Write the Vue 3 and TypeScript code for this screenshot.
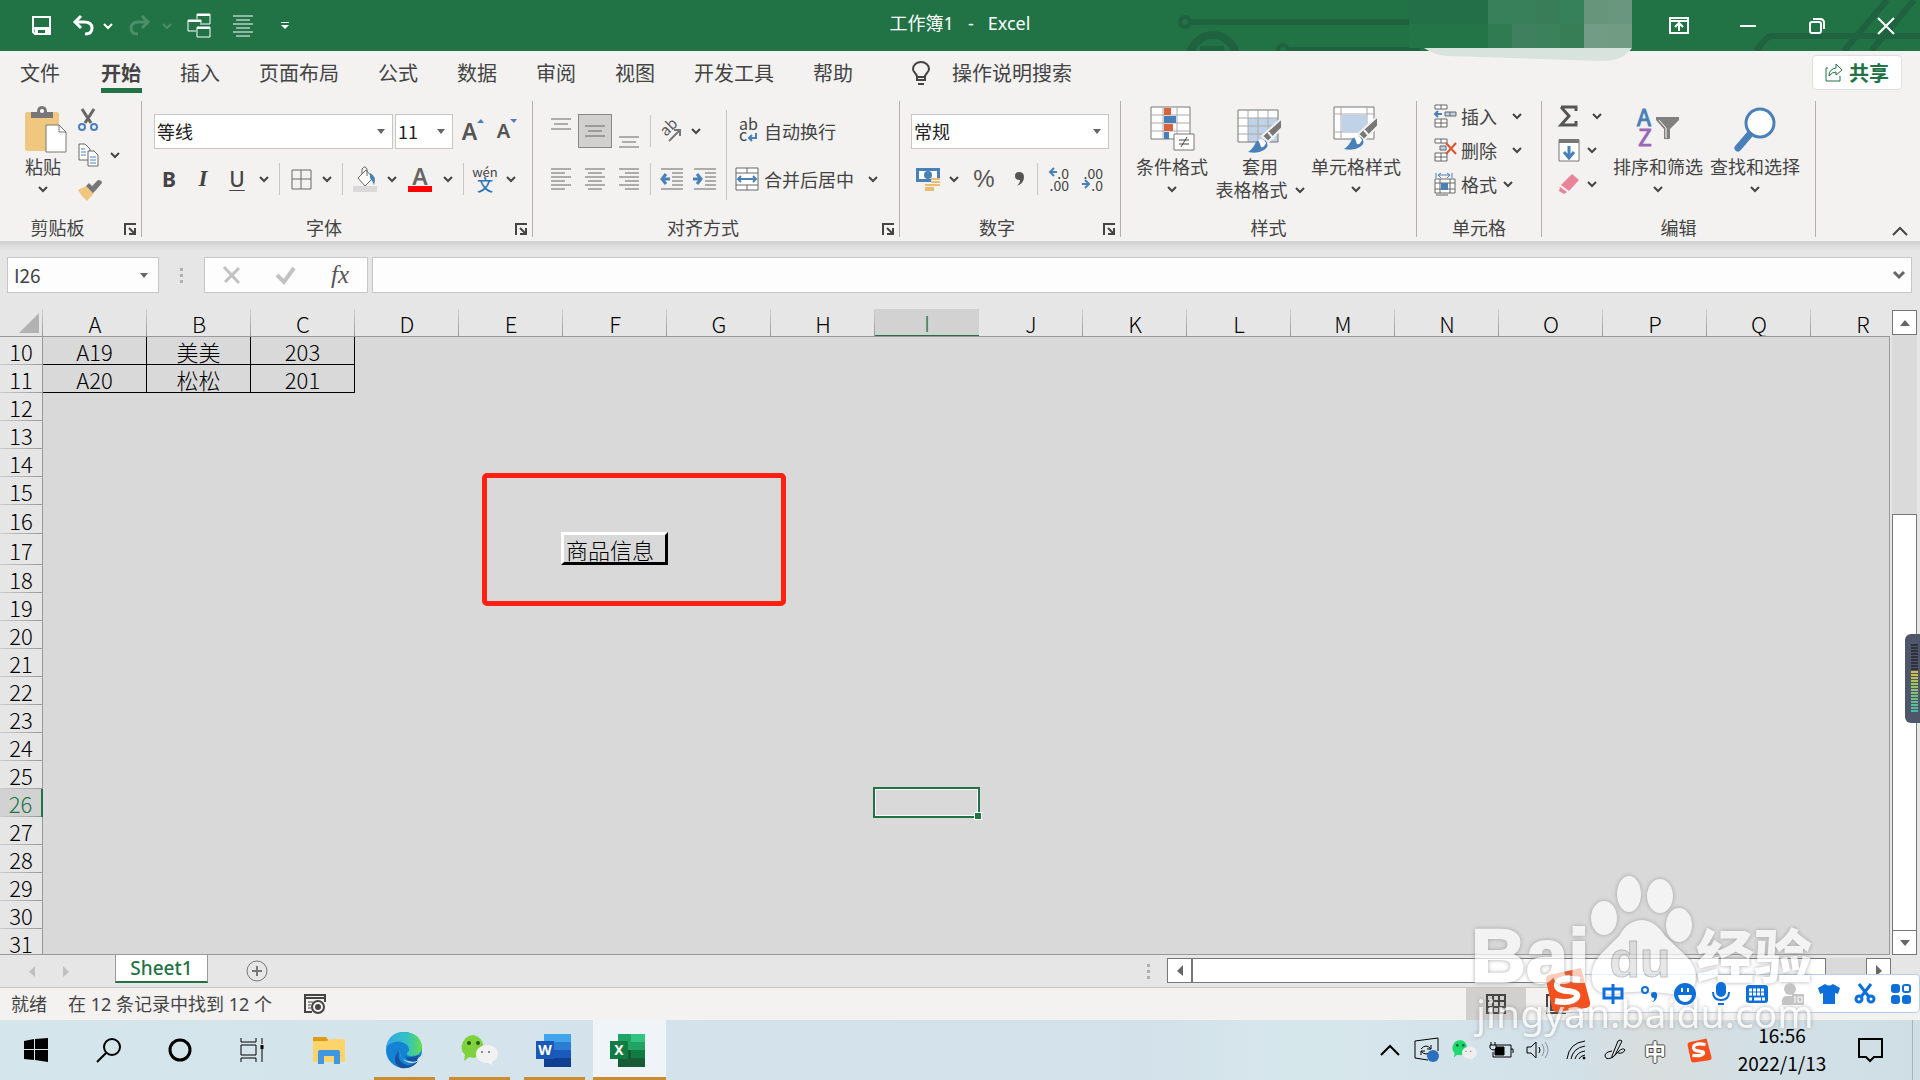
<script setup lang="ts">
import { h, ref } from 'vue'

interface IconProps {
  d: string
  w?: number
  h?: number
  c?: string
  s?: number
}

/* Single-path stroked icon */
const Ic = (p: IconProps) =>
  h('svg', { width: p.w ?? 22, height: p.h ?? 22, viewBox: `0 0 ${p.w ?? 22} ${p.h ?? 22}` }, [
    h('path', { d: p.d, fill: 'none', stroke: p.c ?? '#666', 'stroke-width': p.s ?? 1 }),
  ])
/* Small drop-down arrow beside a command */
const Chev = () =>
  h('svg', { width: 10, height: 8, viewBox: '0 0 10 8' }, [
    h('path', { d: 'M1 2l4 4 4-4', fill: 'none', stroke: '#444', 'stroke-width': 2 }),
  ])
const Tri = () =>
  h('svg', { class: 'tri', width: 8, height: 5, viewBox: '0 0 8 5' }, [h('path', { d: 'M0 0h8l-4 5z', fill: '#666' })])
const Launch = () =>
  h('svg', { width: 12, height: 12, viewBox: '0 0 12 12' }, [
    h('path', { d: 'M1 12V1h11M5 5l5 5M11 5v6H5', fill: 'none', stroke: '#444', 'stroke-width': 2 }),
  ])

const tabs = ['文件', '开始', '插入', '页面布局', '公式', '数据', '审阅', '视图', '开发工具', '帮助']
const active = ref('开始')
const cols = 'ABCDEFGHIJKLMNOPQR'.split('')
const rows = Array.from({ length: 22 }, (_, i) => i + 10)
const data: Record<number, string[]> = { 10: ['A19', '美美', '203'], 11: ['A20', '松松', '201'] }
const cell = (r: number, c: number) => data[r]?.[c] ?? ''

const mosaic = [
  ['#236f47', '#37805a', '#37805a', '#387d57', '#37815a', '#67957c', '#6a967f'],
  ['#237447', '#317b53', '#3f815e', '#3b815b', '#377e57', '#739c86', '#729b84'],
]
const alignTop = 'M1 1h20M4 6h14M1 11h20'
const fontName = ref('等线')
const fontSize = ref('11')
const numFormat = ref('常规')
const nameBox = ref('I26')
const formula = ref('')
</script>

<template>
  <div class="app">
    <header class="title">
      <svg class="circuit" width="760" height="51" viewBox="1160 0 760 51" fill="none" stroke="#1f6240" stroke-width="6">
        <circle cx="1185" cy="22" r="5" stroke-width="4" />
        <path d="M1191 22h220M1290 50h130M1756 51l9-11q3-4 7-4h148M1844 51l43-51M1871 51l43-51" />
        <circle cx="1213" cy="58" r="23" stroke-width="8" />
        <path d="M1200 50h24" stroke-width="8" />
        <circle cx="1283" cy="50" r="5" stroke-width="4" />
      </svg>
      <div class="mosaic">
        <div v-for="(line, i) in mosaic" :key="i" class="mrow">
          <i v-for="(c, j) in line" :key="j" :style="{ background: c }"></i>
        </div>
        <svg width="208" height="13" viewBox="0 0 208 13"><path d="M0 0h208q-9 13-30 13L24 8Q10 7 0 0z" fill="#d9e3dd" /></svg>
      </div>
      <div class="qat">
        <button class="q-save" aria-label="保存"><svg width="19" height="19" viewBox="0 0 19 19"><path d="M1 1h17v17H3l-2-2z" fill="none" stroke="#fff" stroke-width="2" /><path d="M2 11h15v7h-4v-4H6v4H3z" fill="#fff" /></svg></button>
        <button class="q-undo" aria-label="撤消"><svg width="23" height="21" viewBox="0 0 23 21"><path d="M9 1L3 7l6 6M3 7h9q8 0 8 6t-7 6" fill="none" stroke="#fff" stroke-width="3" /></svg></button>
        <button class="q-ch" aria-label="撤消列表"><Ic d="M1 2l4 4 4-4" :w="10" :h="8" c="#fff" :s="2" /></button>
        <button class="q-redo" aria-label="恢复"><svg width="23" height="21" viewBox="0 0 23 21"><path d="M14 1l6 6-6 6M20 7h-9q-8 0-8 6t7 6" fill="none" stroke="#4c8e69" stroke-width="3" /></svg></button>
        <button class="q-ch" aria-label="恢复列表"><Ic d="M1 2l4 4 4-4" :w="10" :h="8" c="#4c8e69" :s="2" /></button>
        <button class="q-big" aria-label="切换窗口"><svg width="24" height="25" viewBox="0 0 24 25" fill="none" stroke="#fff"><path d="M10 6V1h13v10h-8M9 18H1V7h13v5M10 14h13v10H10z" /><path d="M10 2h13M1 8h13M10 15h13" stroke-width="2" /></svg></button>
        <button class="q-big" aria-label="居中"><Ic d="M0 1h20M3 5h14M0 9h20M3 13h14M0 17h20M3 21h14" :w="20" :h="22" c="#fff" /></button>
        <button class="q-more" aria-label="自定义快速访问工具栏"><svg width="8" height="8" viewBox="0 0 8 8"><path d="M0 0h8v1H0zM0 3h8L4 7z" fill="#fff" /></svg></button>
      </div>
      <h1>工作簿1&nbsp;&nbsp; -&nbsp;&nbsp; Excel</h1>
      <div class="win">
        <button aria-label="功能区显示选项"><Ic d="M1 1h18v15H1zM1 4h18M10 14V7M6 10l4-4 4 4" :w="20" :h="17" c="#fff" :s="2" /></button>
        <button aria-label="最小化"><Ic d="M0 1h16" :w="16" :h="2" c="#fff" :s="2" /></button>
        <button aria-label="还原"><svg width="16" height="17" viewBox="0 0 16 17" fill="none" stroke="#fff" stroke-width="2"><rect x="1" y="5" width="11" height="11" rx="2" /><path d="M4 2h7q4 0 4 4v6" /></svg></button>
        <button aria-label="关闭"><Ic d="M0 0l16 16M16 0L0 16" :w="16" :h="16" c="#fff" :s="2" /></button>
      </div>
    </header>

    <nav class="tabs">
      <button v-for="t in tabs" :key="t" :class="{ on: active === t }" @click="active = t">{{ t }}</button>
      <button class="tell">
        <svg width="18" height="25" viewBox="0 0 18 25" fill="none" stroke="#444" stroke-width="2"><path d="M5 19v-3q0-2-2-4-2-2-2-4a8 7 0 0 1 16 0q0 2-2 4-2 2-2 4v3zM5 16h8M6 23h6" /></svg>
        操作说明搜索
      </button>
      <button class="share">
        <svg width="18" height="19" viewBox="0 0 18 19" fill="none" stroke="#217346"><path d="M3 5H1v13h14v-5M4 13q0-7 7-8V1l6 6-6 5V9q-4 0-7 4z" /></svg>
        共享
      </button>
    </nav>

    <section class="ribbon">
      <div class="grp g1">
        <div class="body">
          <button class="big b-paste">
            <svg width="48" height="46" viewBox="-6 0 48 46"><path d="M2 6h30q2 0 2 2v37H2q-2 0-2-2V8q0-2 2-2z" fill="#efc77f" /><path d="M6 12V6h6q0-6 5-6t5 6h6v6z" fill="#777" /><circle cx="17" cy="5" r="2" fill="#fff" /><path d="M21 19h13l7 7v20H21z" fill="#fff" stroke="#777" /><path d="M34 19v7h7" fill="none" stroke="#777" /></svg>
            <span>粘贴</span><Chev />
          </button>
          <div class="clip">
            <button aria-label="剪切"><svg width="20" height="24" viewBox="0 0 20 24" fill="none"><path d="M4 1l9 14M16 1L7 15" stroke="#666" stroke-width="3" /><circle cx="4" cy="19" r="3" stroke="#4a80b9" stroke-width="2" /><circle cx="16" cy="19" r="3" stroke="#4a80b9" stroke-width="2" /></svg></button>
            <button aria-label="复制"><svg width="21" height="24" viewBox="0 0 21 24" fill="#fff" stroke="#666"><path d="M1 1h6l5 5v11H1z" /><path d="M10 8h6l4 4v11H10z" /><path d="M3 6h4M3 9h5M3 12h5M12 14h6M12 17h6M12 20h6" stroke="#4a80b9" /></svg><Chev /></button>
            <button aria-label="格式刷"><svg width="24" height="21" viewBox="0 0 24 21"><path d="M0 10l8-4 8 7-7 8q-6-5-9-11z" fill="#efc77f" /><path d="M8 6l3-3 7 7-3 3zM14 6l6-6q4 0 4 3l-6 7z" fill="#777" /></svg></button>
          </div>
        </div>
        <div class="cap"><span>剪贴板</span><button aria-label="剪贴板选项"><Launch /></button></div>
      </div>

      <div class="grp g2">
        <div class="rows">
          <div class="row inset">
            <label class="pick font"><select v-model="fontName" aria-label="字体"><option>等线</option></select><Tri /></label>
            <label class="pick size"><select v-model="fontSize" aria-label="字号"><option>11</option></select><Tri /></label>
            <button class="w36 glyph" aria-label="增大字号"><b class="ga">A</b><svg class="up" width="7" height="4" viewBox="0 0 7 4"><path d="M0 4h7L4 0z" fill="#4a80b9" /></svg></button>
            <button class="w28 glyph" aria-label="减小字号"><b class="gs">A</b><svg class="up" width="7" height="4" viewBox="0 0 7 4"><path d="M0 0h7L4 4z" fill="#4a80b9" /></svg></button>
          </div>
          <div class="row">
            <button class="w34 bold">B</button><button class="w34 ital">I</button><button class="w34 under">U</button><button class="w20" aria-label="下划线选项"><Chev /></button>
            <i class="sep"></i>
            <button class="w32" aria-label="边框"><Ic d="M1 1h19v19H1zM10 1v19M1 10h19" :w="21" :h="21" c="#666" /></button><button class="w20" aria-label="边框选项"><Chev /></button>
            <i class="sep"></i>
            <button class="w34" aria-label="填充颜色"><svg width="24" height="26" viewBox="0 0 24 26"><path d="M5 12l8-8 7 8-8 8z" fill="#fff" stroke="#666" /><path d="M9 8V3q3-4 5 0v7" fill="none" stroke="#666" /><path d="M17 7q7 3 4 12-2-5-4-7z" fill="#4a80b9" /><path d="M0 20h24v6H0z" fill="#d9d9d9" /></svg></button><button class="w20" aria-label="填充颜色选项"><Chev /></button>
            <button class="w36 fcol" aria-label="字体颜色"><b>A</b><i></i></button><button class="w20" aria-label="字体颜色选项"><Chev /></button>
            <i class="sep"></i>
            <button class="w32 wen" aria-label="显示拼音"><span>wén</span><span class="zi">文</span></button><button class="w20" aria-label="拼音选项"><Chev /></button>
          </div>
        </div>
        <div class="cap"><span>字体</span><button aria-label="字体选项"><Launch /></button></div>
      </div>

      <div class="grp g3">
        <div class="body">
          <div class="rows alg">
            <div class="row">
              <button class="w34 top" aria-label="顶端对齐"><Ic :d="alignTop" :h="12" /></button>
              <button class="w34 on" aria-label="垂直居中"><Ic :d="alignTop" :h="12" /></button>
              <button class="w34 bot" aria-label="底端对齐"><Ic :d="alignTop" :h="12" /></button>
              <i class="sep"></i>
              <button class="w32" aria-label="方向"><svg width="22" height="22" viewBox="0 0 22 22"><text font-size="15" fill="#555" transform="translate(6 17) rotate(-45)">ab</text><path d="M9 21L20 10M14 10h6v6" fill="none" stroke="#777" stroke-width="2" /></svg></button><button class="w18" aria-label="方向选项"><Chev /></button>
            </div>
            <div class="row">
              <button class="w34" aria-label="左对齐"><Ic d="M1 1h20M1 5h14M1 9h20M1 13h14M1 17h20M1 21h14" /></button>
              <button class="w34" aria-label="居中"><Ic d="M1 1h20M4 5h14M1 9h20M4 13h14M1 17h20M4 21h14" /></button>
              <button class="w34" aria-label="右对齐"><Ic d="M1 1h20M7 5h14M1 9h20M7 13h14M1 17h20M7 21h14" /></button>
              <i class="sep"></i>
              <button class="w32" aria-label="减少缩进量"><svg width="23" height="22" viewBox="0 0 23 22" fill="none"><path d="M1 1h22M12 5h11M12 9h11M12 13h11M12 17h11M1 21h22" stroke="#666" /><path d="M10 11H2M6 6l-4 5 4 5" stroke="#4a80b9" stroke-width="3" /></svg></button>
              <button class="w34" aria-label="增加缩进量"><svg width="23" height="22" viewBox="0 0 23 22" fill="none"><path d="M1 1h22M12 5h11M12 9h11M12 13h11M12 17h11M1 21h22" stroke="#666" /><path d="M0 11h8M4 6l4 5-4 5" stroke="#4a80b9" stroke-width="3" /></svg></button>
            </div>
          </div>
          <div class="rows wraps">
            <button class="row txt"><svg width="24" height="24" viewBox="0 0 24 24"><text x="4" y="11" font-size="16" fill="#444">ab</text><text x="4" y="22" font-size="16" fill="#444">c</text><path d="M21 14v5h-6M17 16l-3 3 3 3" fill="none" stroke="#4a80b9" stroke-width="2" /></svg><span>自动换行</span></button>
            <button class="row txt"><svg width="24" height="24" viewBox="0 0 24 24" fill="none"><path d="M1 1h22v22H1zM1 6h22M1 18h22M12 1v5M12 18v5" fill="#fff" stroke="#666" /><path d="M3 12h18M6 9l-3 3 3 3M18 9l3 3-3 3" stroke="#4a80b9" stroke-width="2" /></svg><span>合并后居中</span><Chev class="gap" /></button>
          </div>
        </div>
        <div class="cap"><span>对齐方式</span><button aria-label="对齐方式选项"><Launch /></button></div>
      </div>

      <div class="grp g4">
        <div class="rows">
          <div class="row"><label class="pick fmt"><select v-model="numFormat" aria-label="数字格式"><option>常规</option></select><Tri /></label></div>
          <div class="row">
            <button class="w34" aria-label="会计数字格式"><svg width="24" height="23" viewBox="0 0 24 23"><path d="M0 0h24v14H0z" fill="#4a80b9" /><path d="M3 3h18v8H3z" fill="#fff" /><circle cx="12" cy="7" r="4" fill="#4a80b9" /><path d="M15 10h9v10h-9zM8 16h10v7H8z" fill="#f3f2f1" /><path d="M15 11h9M15 14h9M15 17h9M9 17h9M9 20h9M9 22h9" stroke="#e8bd72" stroke-width="2" /></svg></button><button class="w18" aria-label="会计格式选项"><Chev /></button>
            <button class="pct">%</button>
            <button class="w28" aria-label="千位分隔样式"><svg width="9" height="14" viewBox="0 0 9 14"><path d="M1 14q4-2 4-6-5 0-5-4t4-4q5 0 5 5 0 7-8 9z" fill="#555" /></svg></button>
            <i class="sep"></i>
            <button class="w34 dec" aria-label="增加小数位数"><span><Ic d="M9 5H2M6 1L2 5l4 4" :w="9" :h="10" c="#4a80b9" :s="2" />.0</span><span>.00</span></button>
            <button class="w34 dec" aria-label="减少小数位数"><span>.00</span><span><Ic d="M0 5h7M3 1l4 4-4 4" :w="9" :h="10" c="#4a80b9" :s="2" />.0</span></button>
          </div>
        </div>
        <div class="cap"><span>数字</span><button aria-label="数字选项"><Launch /></button></div>
      </div>

      <div class="grp g5">
        <div class="body">
          <button class="big b-cond">
            <svg width="46" height="46" viewBox="0 0 46 46"><path d="M2 1h39v32H2z" fill="#fff" stroke="#777" /><path d="M2 9h39M2 17h39M2 25h39M14 1v32M28 1v32" stroke="#aaa" /><path d="M15 2h7v7h-7zM15 18h9v7h-9z" fill="#d9623f" /><path d="M15 10h12v7H15zM15 26h5v7h-5z" fill="#4a80b9" /><path d="M25 28h20v16H25z" fill="#fff" stroke="#777" /><path d="M30 34h10M30 38h10M38 31l-6 10" stroke="#444" /></svg>
            <span>条件格式</span><Chev />
          </button>
          <button class="big b-table">
            <svg width="46" height="46" viewBox="0 0 46 46"><path d="M1 4h40v32H1z" fill="#fff" /><path d="M11 12h30v24H11z" fill="#bfd2e8" /><path d="M1 12h40M1 20h40M1 28h40M11 4v32M21 4v32M31 4v32" stroke="#aaa" /><path d="M1 4h40v32H1z" fill="none" stroke="#777" /><path d="M45 12v10L31 36l-6-6z" fill="#777" stroke="#f3f2f1" stroke-width="2" /><path d="M31 26l6 7" stroke="#f3f2f1" stroke-width="2" /><path d="M11 46q5-3 8-10 5-5 10-1 4 5-2 9-6 4-16 2z" fill="#4a80b9" /><path d="M21 34q5-3 8 3-2 5-5 4-1-4-3-7z" fill="#fff" /></svg>
            <span>套用</span><span>表格格式 <Chev /></span>
          </button>
          <button class="big b-cell">
            <svg width="46" height="46" viewBox="0 0 46 46"><path d="M1 1h40v32H1z" fill="#fff" stroke="#777" /><path d="M1 8h40M1 26h40M8 1v32M34 1v32" stroke="#aaa" /><path d="M9 9h25v17H9z" fill="#bfd2e8" /><path d="M45 10v10L31 34l-6-6z" fill="#777" stroke="#f3f2f1" stroke-width="2" /><path d="M31 24l6 7" stroke="#f3f2f1" stroke-width="2" /><path d="M11 43q5-3 8-10 5-5 10-1 4 5-2 9-6 4-16 2z" fill="#4a80b9" /><path d="M21 31q5-3 8 3-2 5-5 4-1-4-3-7z" fill="#fff" /></svg>
            <span>单元格样式</span><Chev />
          </button>
        </div>
        <div class="cap solo"><span>样式</span></div>
      </div>

      <div class="grp g6">
        <div class="stack">
          <button><svg width="24" height="24" viewBox="0 0 24 24" fill="#fff" stroke="#666"><path d="M2 1h12v4H2zM8 1v4M2 15h12v8H2zM8 15v8M2 19h12" /><path d="M12 8h11v4H12zM17 8v4" fill="#bfd2e8" /><path d="M9 10H2M5 7l-3 3 3 3" fill="none" stroke="#4a80b9" stroke-width="2" /></svg><span>插入</span><Chev class="far" /></button>
          <button><svg width="24" height="24" viewBox="0 0 24 24" fill="#fff" stroke="#666"><path d="M2 1h12v4H2zM8 1v4M2 15h12v8H2zM8 15v8M2 19h12" /><path d="M7 8h6v4H7z" fill="#bfd2e8" /><path d="M13 5l10 11M23 5L13 16" stroke="#d9532f" stroke-width="2" /></svg><span>删除</span><Chev class="far" /></button>
          <button><svg width="24" height="24" viewBox="0 0 24 24" fill="#fff" stroke="#666"><path d="M2 7h20v14H2zM7 7v14M17 7v14M2 11h20M2 17h20" /><path d="M8 11h7v7H8z" fill="#4a80b9" stroke="none" /><path d="M3 1v5M19 1v5M5 3h12M8 1L5 3l3 3M14 1l3 2-3 3" fill="none" stroke="#4a80b9" /><path d="M3 23h12" /></svg><span>格式</span><Chev class="near" /></button>
        </div>
        <div class="cap solo"><span>单元格</span></div>
      </div>

      <div class="grp g7">
        <div class="body">
          <div class="stack edit">
            <button aria-label="自动求和"><svg width="24" height="22" viewBox="0 0 24 22"><path d="M5 2h15v4M5 2l8 9-8 9h15v-4" fill="none" stroke="#555" stroke-width="3" /></svg><Chev class="near" /></button>
            <button aria-label="填充"><svg width="24" height="24" viewBox="0 0 24 24"><path d="M3 2h20v21H3z" fill="#fff" stroke="#777" /><path d="M3 1h20v4H3z" fill="#777" /><path d="M13 8v11M8 14l5 6 5-6" fill="none" stroke="#4a80b9" stroke-width="3" /></svg><Chev /></button>
            <button aria-label="清除"><svg width="24" height="22" viewBox="0 0 24 22"><path d="M16 1l7 6-10 11-8-6z" fill="#e8839a" /><path d="M4 14l7 5-3 2-5-3z" fill="#e8839a" /></svg><Chev /></button>
          </div>
          <button class="big b-sort">
            <svg width="44" height="46" viewBox="0 0 44 46"><text x="1" y="20" font-size="23" fill="#4a80b9" stroke="#4a80b9">A</text><text x="2" y="40" font-size="23" fill="#9966b8" stroke="#9966b8">Z</text><path d="M20 11h23v3l-9 9v10h-6V23l-8-9z" fill="#808080" /><path d="M23 14l7 8v10" fill="none" stroke="#fff" /></svg>
            <span>排序和筛选</span><Chev />
          </button>
          <button class="big b-find">
            <svg width="44" height="46" viewBox="0 0 44 46"><path d="M5 42l12-14" stroke="#4a80b9" stroke-width="7" stroke-linecap="round" /><circle cx="27" cy="17" r="14" fill="#fff" stroke="#4a80b9" stroke-width="3" /></svg>
            <span>查找和选择</span><Chev />
          </button>
        </div>
        <div class="cap solo"><span>编辑</span></div>
      </div>
      <button class="collapse" aria-label="折叠功能区"><Ic d="M1 9l7-7 7 7" :w="16" :h="11" c="#444" :s="2" /></button>
    </section>

    <section class="fbar">
      <label class="name"><input v-model="nameBox" aria-label="名称框" /><Tri /></label>
      <div class="dots"><i></i><i></i><i></i></div>
      <div class="fx">
        <button aria-label="取消"><svg width="18" height="18" viewBox="0 0 18 18"><path d="M1 1l15 16M16 2L2 16" stroke="#c2c2c2" stroke-width="3" /></svg></button>
        <button aria-label="输入"><svg width="20" height="18" viewBox="0 0 20 18"><path d="M1 9l7 7L18 2" fill="none" stroke="#c2c2c2" stroke-width="4" /></svg></button>
        <button class="fxi">fx</button>
      </div>
      <label class="formula"><input v-model="formula" aria-label="编辑栏" /><Ic d="M1 1l5 5 5-5" :w="12" :h="9" c="#666" :s="3" /></label>
    </section>

    <main class="work">
      <div class="sheet">
        <table>
          <colgroup><col class="c0" /><col v-for="c in cols" :key="c" class="cn" /></colgroup>
          <thead>
            <tr><th class="corner"><svg width="20" height="20" viewBox="0 0 20 20"><path d="M20 0v20H0z" fill="#b2b2b2" /></svg></th><th v-for="c in cols" :key="c" :class="{ sel: c === 'I' }">{{ c }}</th></tr>
          </thead>
          <tbody>
            <tr v-for="r in rows" :key="r" :class="'r' + r">
              <th :class="{ sel: r === 26 }">{{ r }}</th>
              <td v-for="(c, i) in cols" :key="c" :class="{ box: cell(r, i) }">{{ cell(r, i) }}<span v-if="r === 26 && c === 'I'" class="cursor"><i></i></span></td>
            </tr>
          </tbody>
        </table>
        <div class="mark"></div>
        <button class="macro">商品信息</button>
      </div>
      <div class="vbar">
        <button aria-label="向上滚动"><svg width="10" height="6" viewBox="0 0 10 6"><path d="M0 6l5-6 5 6z" fill="#666" /></svg></button>
        <div class="track"><div class="thumb"></div></div>
        <button aria-label="向下滚动"><svg width="10" height="6" viewBox="0 0 10 6"><path d="M0 0l5 6 5-6z" fill="#666" /></svg></button>
      </div>
      <div class="level"><i></i></div>
    </main>

    <section class="sbar">
      <button class="nav" aria-label="上一张"><svg width="6" height="11" viewBox="0 0 6 11"><path d="M6 0v11L0 6z" fill="#c0c0c0" /></svg></button>
      <button class="nav" aria-label="下一张"><svg width="6" height="11" viewBox="0 0 6 11"><path d="M0 0v11l6-5z" fill="#c0c0c0" /></svg></button>
      <button class="tab">Sheet1</button>
      <button class="add" aria-label="新工作表"><svg width="22" height="22" viewBox="0 0 22 22"><circle cx="11" cy="11" r="10" fill="none" stroke="#777" /><path d="M11 6v10M6 11h10" stroke="#777" stroke-width="2" /></svg></button>
      <div class="dots"><i></i><i></i><i></i></div>
      <div class="hbar">
        <button aria-label="向左滚动"><svg width="6" height="11" viewBox="0 0 6 11"><path d="M6 0v11L0 6z" fill="#666" /></svg></button>
        <div class="hthumb"></div>
        <button class="hr" aria-label="向右滚动"><svg width="6" height="11" viewBox="0 0 6 11"><path d="M0 0v11l6-5z" fill="#666" /></svg></button>
      </div>
    </section>

    <footer class="status">
      <span>就绪</span><span>在 12 条记录中找到 12 个</span>
      <button aria-label="录制宏"><svg width="22" height="20" viewBox="0 0 22 20" fill="none" stroke="#444"><path d="M8 18H1V1h20v7M1 4h20" stroke-width="2" /><path d="M4 8h5M4 11h3M4 14h3" /><circle cx="14" cy="13" r="6" stroke-width="2" fill="#f3f2f1" /><circle cx="14" cy="13" r="2" fill="#444" stroke-width="2" /></svg></button>
      <div class="views">
        <button class="on" aria-label="普通"><Ic d="M1 1h18v18H1zM7 1v18M13 1v18M1 7h18M1 13h18" :w="20" :h="20" c="#444" :s="2" /></button>
        <button aria-label="页面布局视图"><Ic d="M1 1h18v18H1zM5 4h10v12H5z" :w="20" :h="20" c="#444" :s="2" /></button>
      </div>
    </footer>

    <footer class="task">
      <button class="sys" aria-label="开始菜单"><svg width="24" height="24" viewBox="0 0 24 24"><path d="M0 3l10-2v10H0zM11 1l13-1v11H11zM0 12h10v10L0 21zM11 12h13v12l-13-2z" /></svg></button>
      <button class="sys" aria-label="搜索"><svg width="25" height="25" viewBox="0 0 25 25" fill="none" stroke="#000" stroke-width="2"><circle cx="16" cy="9" r="8" /><path d="M10 15l-9 9" /></svg></button>
      <button class="sys" aria-label="Cortana"><svg width="24" height="24" viewBox="0 0 24 24"><circle cx="12" cy="12" r="10" fill="none" stroke="#000" stroke-width="3" /></svg></button>
      <button class="sys" aria-label="任务视图"><svg width="25" height="24" viewBox="0 0 25 24" fill="none" stroke="#000"><path d="M1 0v4h15V0M1 7h15v10H1zM1 24v-4h15v4M22 0v6M22 11v13" /><path d="M22 7v4" stroke-width="3" /></svg></button>
      <button class="appi first" aria-label="文件资源管理器"><svg width="32" height="28" viewBox="0 0 32 28"><path d="M0 1h13l3 4H0z" fill="#dc9c15" /><path d="M0 5h14l3-2h13q2 0 2 2v21H0z" fill="#fdd469" /><path d="M5 16q0-2 2-2h18q2 0 2 2v12h-6v-8H11v8H5z" fill="#3e97e0" /></svg></button>
      <button class="appi open" aria-label="Edge"><svg width="36" height="36" viewBox="0 0 36 36"><defs><linearGradient id="e1" x1="0" x2="1"><stop stop-color="#35a5e8" /><stop offset=".6" stop-color="#31c3c0" /><stop offset="1" stop-color="#68dc4a" /></linearGradient></defs><circle cx="18" cy="18" r="18" fill="#1483d4" /><path d="M0 17Q2 0 18 0q17 1 18 15 0 9-11 9-5 0-4-3 4-3 0-8-7-6-15-2Q1 13 0 17z" fill="url(#e1)" /><path d="M13 18q-3 12 8 15 6 1 12-5-7 10-18 8Q4 30 13 18z" fill="#15529e" /><path d="M14 17q-2 9 7 12 7 1 14-5l1 2-3 3q-8 4-14 0-7-5-5-12z" fill="#d5e4ec" /><path d="M19 24q6 3 14-1l-2 6q-8 3-12-5z" fill="#15529e" /></svg></button>
      <button class="appi open" aria-label="微信"><svg width="36" height="30" viewBox="0 0 36 30"><path d="M13 0a13 12 0 0 1 0 23l-5-1-5 4 1-6A13 12 0 0 1 13 0z" fill="#7ed33c" /><circle cx="8" cy="8" r="2" fill="#285c12" /><circle cx="17" cy="8" r="2" fill="#285c12" /><path d="M25 10a11 9 0 0 1 6 17v3l-4-2A11 9 0 1 1 25 10z" fill="#f2f2f2" /><circle cx="21" cy="17" r="1" fill="#666" /><circle cx="28" cy="17" r="1" fill="#666" /></svg></button>
      <button class="appi open" aria-label="Word"><svg width="36" height="33" viewBox="0 0 36 33"><path d="M8 0h27v8H8z" fill="#41a5ee" /><path d="M8 8h27v8H8z" fill="#2b7cd3" /><path d="M8 16h27v8H8z" fill="#185abd" /><path d="M8 24h27v9H8z" fill="#103f91" /><path d="M0 7h18v18H0z" fill="#1b57b5" /><text x="9" y="21" text-anchor="middle" font-size="14" font-weight="700" fill="#fff">W</text></svg></button>
      <button class="appi open cur" aria-label="Excel"><svg width="36" height="33" viewBox="0 0 36 33"><path d="M8 0h27v33H8z" fill="#21a366" /><path d="M21 0h14v8H21z" fill="#33c481" /><path d="M8 16h27v17H8z" fill="#185c37" /><path d="M21 16h14v8H21z" fill="#107c41" /><path d="M0 7h18v18H0z" fill="#107c41" /><text x="9" y="21" text-anchor="middle" font-size="14" font-weight="700" fill="#fff">X</text></svg></button>
      <div class="tray">
        <button aria-label="显示隐藏的图标"><Ic d="M1 10l9-9 9 9" :w="20" :h="11" c="#000" :s="2" /></button>
        <button aria-label="同步"><svg width="26" height="26" viewBox="0 0 26 26" fill="none" stroke="#000"><path d="M1 4l23-3v13M1 4v17l13 2" /><path d="M7 12q5-6 10 0M17 8v4h-4M17 14q-5 6-10 0M7 18v-4h4" /><circle cx="19" cy="19" r="6" fill="#2b6fbd" stroke="none" /></svg></button>
        <button aria-label="微信"><svg width="24" height="20" viewBox="0 0 36 30"><path d="M13 0a13 12 0 0 1 0 23l-5-1-5 4 1-6A13 12 0 0 1 13 0z" fill="#1ed76d" /><circle cx="8" cy="8" r="2" fill="#176c35" /><circle cx="17" cy="8" r="2" fill="#176c35" /><path d="M25 10a11 9 0 0 1 6 17v3l-4-2A11 9 0 1 1 25 10z" fill="#eee" /><circle cx="21" cy="17" r="1" fill="#666" /><circle cx="28" cy="17" r="1" fill="#666" /></svg></button>
        <button aria-label="电池"><svg width="24" height="18" viewBox="0 0 24 18" fill="none" stroke="#000"><path d="M7 4h15v12H4v-5M22 8h2v4" /><path d="M6 6h9v8H6z" fill="#000" /><path d="M1 4h6v3q-3 4-6 0zM2 1v3M6 1v3" fill="#d5e1e8" /></svg></button>
        <button aria-label="音量"><svg width="24" height="20" viewBox="0 0 24 20" fill="none" stroke="#000"><path d="M1 7h4l5-5v16l-5-5H1z" /><path d="M13 7q2 3 0 6" /><path d="M16 4q4 6 0 12M19 2q6 8 0 16" stroke="#8a949a" /></svg></button>
        <button class="net" aria-label="网络"><svg width="20" height="20" viewBox="0 0 20 20" fill="none" stroke="#000"><path d="M1 19Q3 3 19 1M5 19Q7 8 19 6M9 19q2-7 10-8M13 19q1-3 6-4" /><circle cx="18" cy="18" r="1" fill="#000" /></svg></button>
        <button aria-label="触控笔"><svg width="22" height="22" viewBox="0 0 22 22" fill="none" stroke="#000"><path d="M8 17L14 2q2-2 4 0L11 16l-3 3zM8 12q-7 1-7 5 1 4 6 2 4-2 7-6 5-5 7-2-2 4-7 3" /></svg></button>
        <button class="zh" aria-label="输入法">中</button>
        <button class="sg" aria-label="搜狗输入法"><svg width="25" height="25" viewBox="0 0 46 46"><path d="M4 8L36 1l9 34q1 5-4 6L12 45q-4 0-5-4L1 13q0-4 3-5z" fill="#f4511e" /><path d="M34 12Q14 8 12 17q-1 6 10 7 10 1 8 5-4 5-20 3" fill="none" stroke="#fff" stroke-width="6" /></svg></button>
        <button class="clock"><span>16:56</span><span>2022/1/13</span></button>
        <button class="note" aria-label="通知"><Ic d="M1 1h23v18h-8l-4 4-4-4H1z" :w="25" :h="25" c="#000" :s="2" /></button>
      </div>
    </footer>

    <div class="ime">
      <svg class="sogou" width="48" height="46" viewBox="0 0 46 46"><path d="M4 8L36 1l9 34q1 5-4 6L12 45q-4 0-5-4L1 13q0-4 3-5z" fill="#f4511e" /><path d="M35 13Q14 9 12 17q-1 6 10 7 12 1 10 6-4 7-22 4" fill="none" stroke="#fff" stroke-width="6" /></svg>
      <div class="panel">
        <button aria-label="中文"><Ic d="M2 5h18v9H2zM11 0v20" :h="20" c="#0e6fdb" :s="3" /></button>
        <button aria-label="标点"><svg width="22" height="18" viewBox="0 0 22 18"><circle cx="7" cy="5" r="3" fill="none" stroke="#0e6fdb" stroke-width="2" /><path d="M13 17q4-1 3-4-3 0-3-3t3-3q4 0 3 5-1 5-6 5z" fill="#0e6fdb" /></svg></button>
        <button aria-label="表情"><svg width="22" height="22" viewBox="0 0 22 22"><circle cx="11" cy="11" r="11" fill="#0e6fdb" /><path d="M8 5v4M14 5v4" stroke="#fff" stroke-width="2" /><path d="M4 12h14q-1 7-7 7t-7-7z" fill="#fff" /></svg></button>
        <button aria-label="语音"><svg width="18" height="24" viewBox="0 0 18 24" fill="none" stroke="#0e6fdb" stroke-width="2"><path d="M1 10q0 8 8 8t8-8M6 22h6" /><rect x="5" y="1" width="8" height="13" rx="4" fill="#0e6fdb" /></svg></button>
        <button aria-label="软键盘"><svg width="22" height="18" viewBox="0 0 22 18"><rect width="22" height="18" rx="3" fill="#0e6fdb" /><path d="M3 5h16M3 9h16" stroke="#fff" stroke-width="3" stroke-dasharray="3 1" /><path d="M3 14h3M8 14h7M16 14h3" stroke="#fff" stroke-width="3" /></svg></button>
        <button aria-label="账号"><svg width="22" height="22" viewBox="0 0 22 22" fill="#c4c4c4"><circle cx="8" cy="6" r="6" /><path d="M0 22v-4q0-5 5-5h5v9zM10 11h12v11H10z" /><path d="M13 13v7M16 14h4v5h-4z" fill="none" stroke="#fff" /></svg></button>
        <button aria-label="皮肤"><svg width="22" height="20" viewBox="0 0 22 20"><path d="M7 0q4 3 8 0l7 4-2 6-3-1v11H5V9l-3 1-2-6z" fill="#0e6fdb" /></svg></button>
        <button aria-label="截图"><svg width="22" height="20" viewBox="0 0 22 20" fill="none" stroke="#0e6fdb" stroke-width="3"><path d="M5 0l10 13M17 0L7 13" /><circle cx="5" cy="15" r="3" /><circle cx="17" cy="15" r="3" /></svg></button>
        <button aria-label="工具箱"><svg width="20" height="20" viewBox="0 0 20 20" fill="#0e6fdb"><rect width="9" height="9" rx="3" /><rect x="12" y="1" width="7" height="7" rx="2" fill="none" stroke="#0e6fdb" stroke-width="2" /><rect y="11" width="9" height="9" rx="3" /><rect x="11" y="11" width="9" height="9" rx="3" /></svg></button>
      </div>
    </div>

    <svg class="brand" width="360" height="170" viewBox="0 0 360 170" fill="#fff">
      <text x="6" y="112" font-size="76" font-weight="700" class="latin bai">Bai</text>
      <path d="M176 50q14 0 24 16l20 19q14 13 10 29-5 13-24 10-30-5-58 0-15 1-20-9-5-16 8-31l18-18q8-15 22-16z" />
      <ellipse cx="139" cy="48" rx="13" ry="17" /><ellipse cx="164" cy="24" rx="12" ry="18" /><ellipse cx="195" cy="26" rx="13" ry="17" /><ellipse cx="214" cy="55" rx="13" ry="17" />
      <text x="175" y="107" text-anchor="middle" font-size="50" font-weight="700" class="latin du">du</text>
      <text x="231" y="108" font-size="58" font-weight="900">经验</text>
      <text x="11" y="158" font-size="39" class="url">jingyan.baidu.com</text>
    </svg>
  </div>
</template>

<style>
html, body { margin: 0; }
</style>

<style scoped>
.app { position: relative; display: flex; flex-direction: column; height: 100vh; overflow: hidden; background: #e6e6e6; color: #444; font: 18px/24px "Noto Sans CJK SC", "Noto Sans", sans-serif; }
button, input, select { margin: 0; padding: 0; border: 0; border-radius: 0; background: none; color: inherit; font: inherit; appearance: none; outline: 0; }
button { display: flex; align-items: center; justify-content: center; white-space: nowrap; flex: none; }
svg { flex: none; display: block; overflow: visible; }
i { font-style: normal; }

.title { position: relative; display: flex; align-items: center; justify-content: space-between; flex: none; height: 51px; background: #217346; color: #fff; }
.circuit { position: absolute; right: 0; top: 0; overflow: hidden; }
.mosaic { position: absolute; right: 288px; top: 0; display: flex; flex-direction: column; align-items: flex-end; z-index: 2; }
.mrow { display: flex; }
.mrow i { width: 24px; height: 24px; }
.mrow i:first-child { width: 79px; }
.qat { display: flex; align-items: center; height: 50px; flex: 1 1 0; min-width: 0; }
.q-save { width: 35px; margin-left: 24px; }
.q-undo { width: 35px; margin-left: 7px; }
.q-ch { width: 14px; margin-right: 3px; }
.q-redo { width: 42px; }
.q-big { width: 44px; }
.q-more { width: 40px; }
h1 { margin: 0; font: 18px/46px "Noto Sans", "Noto Sans CJK SC", sans-serif; align-self: flex-start; white-space: pre; }
.win { position: relative; display: flex; flex: 1 1 0; min-width: 0; justify-content: flex-end; }
.win button { width: 69px; height: 48px; }

.tabs { display: flex; flex: none; height: 50px; align-items: flex-start; background: #f3f2f1; }
.tabs button { position: relative; height: 44px; padding: 0 22px 0 20px; font-size: 20px; }
.tabs button + button { padding: 0 19px; margin-right: 1px; }
.tabs button.on { font-weight: 700; }
.tabs button.on::after { content: ""; position: absolute; left: 19px; right: 18px; bottom: 2px; height: 5px; background: #217346; }
.tabs button.tell { gap: 22px; margin-left: 20px; }
.tabs button.share { margin: 4px 18px 0 auto; padding: 0 12px; height: 35px; gap: 6px; background: #fff; border: 1px solid #e1dfdd; border-radius: 4px; color: #217346; font-weight: 700; }

.ribbon { position: relative; display: flex; flex: none; padding-bottom: 4px; background: #f3f2f1; }
.grp { box-sizing: border-box; display: flex; flex-direction: column; flex: none; height: 136px; border-right: 1px solid #b3b0ad; }
.g1 { width: 142px; }
.g2 { width: 391px; }
.g3 { width: 367px; }
.g4 { width: 221px; }
.g5 { width: 296px; }
.g6 { width: 125px; }
.g7 { width: 274px; }
.cap { display: flex; margin: auto 0 1px; align-items: center; height: 18px; line-height: 18px; padding-right: 5px; }
.cap span { flex: 1; text-align: center; padding-right: 9px; }
.cap button { width: 12px; height: 12px; margin-top: 4px; }
.solo { padding-right: 0; }
.solo span { padding: 0; }
.body { display: flex; }
.big { flex-direction: column; justify-content: flex-start; padding-top: 5px; line-height: 23px; }
.big > svg:first-child { margin-bottom: 3px; }
.big > span { display: flex; align-items: center; gap: 7px; }
.big > svg:last-child { margin-top: 7px; }
.b-paste { width: 78px; padding-left: 8px; }
.b-cond { width: 82px; margin-left: 10px; }
.b-table { width: 94px; }
.b-cell { width: 98px; }
.b-sort { width: 100px; }
.b-find { width: 94px; }
.clip { display: flex; flex-direction: column; padding-top: 2px; gap: 1px; }
.clip button { height: 34px; justify-content: flex-start; gap: 11px; }
.rows { display: flex; flex-direction: column; gap: 12px; padding: 12px 0 0 10px; }
.row { display: flex; align-items: center; height: 36px; }
.row > button { height: 34px; }
.inset { padding-left: 2px; gap: 2px; }
.w18 { width: 18px; } .w20 { width: 20px; } .w28 { width: 28px; } .w32 { width: 32px; } .w34 { width: 34px; } .w36 { width: 36px; }
.sep { width: 1px; height: 32px; margin: 0 4px; background: #c8c6c4; }
.g2 .sep { margin: 0 5px; }
.pick { position: relative; display: block; box-sizing: border-box; height: 35px; border: 1px solid #c6c6c6; background: #fff; color: #222; }
.pick select { width: 100%; height: 33px; padding-left: 2px; }
.pick .tri { position: absolute; right: 7px; top: 14px; }
.font { width: 239px; }
.size { width: 58px; }
.fmt { width: 198px; }
.glyph { font-family: "Noto Sans", sans-serif; color: #555; }
.glyph .ga { font-size: 23px; font-weight: 600; }
.glyph .gs { font-size: 20px; font-weight: 600; }
.glyph .up { align-self: flex-start; margin-top: 5px; }
.bold, .under { font: 700 21px/24px "Noto Sans", sans-serif; color: #444; }
.under { font-weight: 500; text-decoration: underline; text-underline-offset: 3px; text-decoration-thickness: 1px; }
.ital { font: italic 700 23px/24px "Liberation Serif", serif; }
.fcol { flex-direction: column; font-family: "Noto Sans", sans-serif; font-size: 23px; line-height: 20px; color: #666; }
.fcol b { font-weight: 600; }
.fcol i { width: 24px; height: 6px; background: #f00; }
.wen { flex-direction: column; font-size: 13px; line-height: 11px; }
.wen .zi { font-size: 16px; line-height: 15px; color: #2f73b8; font-weight: 500; }
.alg { box-sizing: border-box; width: 193px; padding-left: 11px; }
.alg .on { box-sizing: border-box; background: #d2d0ce; border: 1px solid #888; }
.alg .top { align-items: flex-start; padding-top: 4px; }
.alg .bot { align-items: flex-end; }
.wraps { position: relative; padding-left: 9px; }
.wraps::before { content: ""; position: absolute; left: 0; top: 9px; width: 1px; height: 90px; background: #c8c6c4; }
.txt { justify-content: flex-start; gap: 5px; }
.gap { margin-left: 9px; }
.g4 .rows { padding-left: 11px; }
.pct { width: 42px; font: 24px/24px "Liberation Sans", sans-serif; color: #555; }
.dec { flex-direction: column; align-items: flex-end; padding-right: 7px; box-sizing: border-box; font-size: 14px; line-height: 12px; }
.dec span { display: flex; }
.stack { display: flex; flex-direction: column; margin-top: -2px; padding: 0 0 0 16px; }
.stack button { height: 34px; justify-content: flex-start; }
.stack span { margin-left: 4px; }
.far { margin-left: 15px; }
.near { margin-left: 6px; }
.edit { width: 52px; padding-left: 14px; }
.edit button { gap: 7px; }
.edit .near { margin-left: 5px; }
.collapse { margin: auto 12px 0 auto; }

.fbar { display: flex; flex: none; height: 36px; padding: 16px 8px 16px 7px; margin: 0; background: linear-gradient(#cfcfcf, #e6e6e6 9px); }
.fbar > label, .fx { box-sizing: border-box; height: 36px; display: flex; align-items: center; background: #fdfdfd; border: 1px solid #c6c6c6; }
.name { position: relative; width: 152px; }
.name input { width: 110px; padding-left: 6px; font-size: 19px; line-height: 32px; }
.name .tri { position: absolute; right: 10px; }
.dots { display: flex; flex-direction: column; justify-content: center; gap: 3px; }
.dots i { width: 3px; height: 3px; background: #b0b0b0; }
.fbar .dots { width: 45px; align-items: center; }
.fx { width: 164px; }
.fx button { width: 54px; height: 34px; }
.fx .fxi { font: italic 25px/30px "Liberation Serif", serif; color: #555; }
.formula { flex: 1; margin-left: 4px; }
.formula input { flex: 1; min-width: 0; padding: 0 7px; }
.formula svg { margin-right: 6px; }

.work { position: relative; display: flex; flex: 1; min-height: 0; }
.sheet { position: relative; flex: 1; min-width: 0; overflow: hidden; background: linear-gradient(#e6e6e6 28px, #d9d9d9 28px); }
.sheet::after { content: ""; position: absolute; inset: 27px 0 0 0; border: 1px solid #999; border-left: 0; pointer-events: none; }
table { table-layout: fixed; width: 1915px; border-collapse: separate; border-spacing: 0; font-size: 22px; font-weight: 300; line-height: 24px; color: #000; }
.c0 { width: 43px; }
.cn { width: 104px; }
th, td { box-sizing: border-box; height: 28px; padding: 0; font-weight: 300; text-align: center; position: relative; overflow: visible; white-space: nowrap; }
thead th { border-bottom: 1px solid #999; background: linear-gradient(#d0d0d0, #999) right / 1px 100% no-repeat; }
thead th.sel { background: #d2d2d2; color: #217346; border-bottom: 2px solid #217346; }
.corner svg { margin: 0 4px 0 auto; }
tbody th { background: linear-gradient(90deg, #ccc, #999) bottom / 100% 1px no-repeat #e6e6e6; border-right: 1px solid #999; }
tbody th.sel { background-color: #d2d2d2; color: #217346; border-right: 2px solid #217346; }
td.box { border-right: 1px solid #000; border-bottom: 1px solid #000; }
.r16 th { height: 29px; }
.r17 th { height: 31px; }
.cursor { position: absolute; inset: -2px -1px -1px -2px; border: 2px solid #217346; box-shadow: inset 0 0 0 1px #fff; }
.cursor i { position: absolute; right: -3px; bottom: -3px; width: 6px; height: 6px; background: #217346; outline: 1px solid #fff; }
.mark { position: absolute; left: 482px; top: 164px; width: 294px; height: 123px; border: 5px solid #ff2010; border-radius: 5px; }
.macro { position: absolute; left: 561px; top: 223px; width: 107px; height: 33px; justify-content: flex-start; padding-left: 2px; background: #d9d9d9; border: solid; border-width: 3px; border-color: #fff #000 #000 #fff; color: #000; font-size: 22px; font-weight: 300; line-height: 24px; }
.vbar { display: flex; flex-direction: column; flex: none; width: 25px; margin: 1px 3px 0 2px; background: #dadada; }
.vbar button { box-sizing: border-box; height: 25px; border: 1px solid #777; background: #fff; }
.track { flex: 1; padding-top: 179px; display: flex; }
.thumb { flex: 1; border: 1px solid #777; border-bottom: 0; background: #fff; }
.level { position: absolute; right: 0; top: 325px; width: 15px; height: 89px; border-radius: 6px 0 0 6px; background: #50566a; }
.level i { position: absolute; left: 6px; top: 10px; width: 7px; height: 69px; background: repeating-linear-gradient(transparent 0 2px, #50566a 2px 3px), linear-gradient(#30333e 27px, #d9bd3d 27px, #9dc65a 40px, #41b8b0); }

.sbar { display: flex; flex: none; height: 32px; border-bottom: 1px solid #c6c6c6; align-items: flex-start; }
.sbar .nav { width: 34px; height: 32px; margin-left: 15px; }
.sbar .nav + .nav { margin: 0 32px 0 0; }
.tab { box-sizing: border-box; width: 93px; height: 28px; border: solid #999; border-width: 0 1px; border-bottom: 2px solid #217346; background: #fff; color: #217346; font: 500 19px/24px "Noto Sans", sans-serif; }
.add { margin-left: 38px; height: 32px; }
.sbar .dots { height: 32px; margin: 0 17px 0 auto; }
.hbar { display: flex; width: 724px; margin: 3px 29px 0 0; background: #dadada; }
.hbar button { box-sizing: border-box; width: 25px; height: 25px; background: #fff; border: 1px solid #777; }
.hthumb { flex: 1; margin-right: 40px; border: 1px solid #777; background: #fff; }

.status { display: flex; flex: none; align-items: center; height: 32px; padding-left: 11px; background: #f3f2f1; font-family: "Noto Sans", "Noto Sans CJK SC", sans-serif; }
.status span { margin-right: 21px; }
.status > button { margin-left: 11px; }
.views { display: flex; margin: 0 334px 0 auto; }
.views button { width: 60px; height: 32px; }
.views .on { background: #d2d0ce; }

.task { display: flex; flex: none; height: 60px; color: #000; background: linear-gradient(90deg, #d5e5ec, #d3e2ea 60%, #d6e7ec 68%, #d2e0e8 82%, #d9dddd 86%, #d2e0e6 92%, #cfdde5); }
.sys { width: 72px; height: 60px; }
.appi { position: relative; width: 75px; height: 60px; padding-right: 3px; }
.first { margin-left: 5px; }
.open::after { content: ""; position: absolute; left: 6px; right: 8px; bottom: 0; height: 3px; background: #c98c30; }
.cur { background: #eff4f8; width: 73px; }
.cur::after { left: 0; right: 0; }
.task text { font-family: "Noto Sans", sans-serif; }
.tray { display: flex; align-items: center; margin-left: auto; }
.tray button { width: 37px; }
.tray .net { width: 40px; }
.tray .zh { width: 44px; font-size: 22px; font-weight: 700; color: #fff; text-shadow: 1px 0 #444, -1px 0 #444, 0 1px #444, 0 -1px #444; }
.tray .sg { width: 44px; }
.tray .clock { flex-direction: column; width: 108px; margin: 0 0 2px 7px; font-size: 19px; line-height: 28px; }
.tray .note { width: 67px; height: 60px; justify-content: flex-end; padding-right: 29px; box-sizing: border-box; border-right: 1px solid #a9b5bc; margin: 0 7px 0 10px; }

.ime { position: absolute; right: 0; bottom: 67px; display: flex; align-items: center; }
.sogou { position: relative; z-index: 1; margin: -8px -32px 0 0; }
.panel { display: flex; align-items: center; height: 37px; padding-left: 34px; background: #fff; border: 1px solid #b9cde8; border-radius: 4px; }
.panel button { position: relative; z-index: 4; width: 36px; }

.brand { position: absolute; z-index: 3; right: 95px; bottom: 40px; opacity: .7; pointer-events: none; filter: drop-shadow(0 0 2px #888); }
.latin { font-family: "Liberation Sans", sans-serif; }
.bai { stroke: #fff; stroke-width: 2px; }
.du { fill: #ddd; stroke: #aaa; }
.url { font-family: "Noto Sans", sans-serif; }
</style>
